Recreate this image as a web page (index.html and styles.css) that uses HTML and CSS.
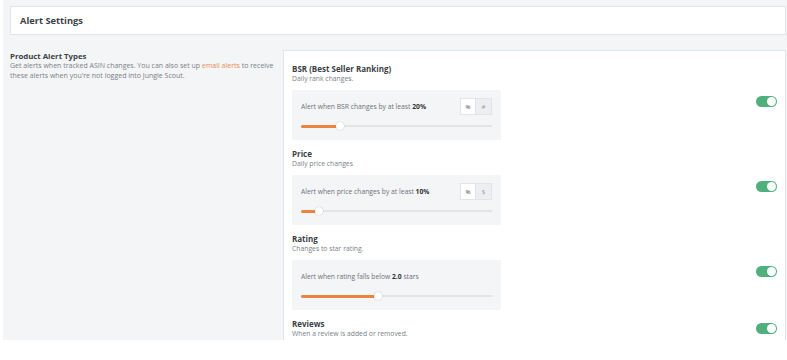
FILE: index.html
```html
<!DOCTYPE html>
<html lang="en">
<head>
    <meta charset="UTF-8">
    <title>Alert Settings</title>
    <link rel="stylesheet" href="styles.css">
</head>
<body>
<div class="page">
    <!-- Page header -->
    <div class="header-card">
        <h1>Alert Settings</h1>
    </div>

    <div class="content">
        <!-- Left description -->
        <div class="intro">
            <h2>Product Alert Types</h2>
            <p>Get alerts when tracked ASIN changes. You can also set up <a href="#">email alerts</a> to receive these alerts when you're not logged into Jungle Scout.</p>
        </div>

        <!-- Alert types -->
        <div class="alerts-card">
            <div class="alert-row">
                <div class="alert-body">
                    <h3>BSR (Best Seller Ranking)</h3>
                    <p class="sub">Daily rank changes.</p>
                    <div class="alert-box">
                        <div class="box-top">
                            <span>Alert when BSR changes by at least <b>20%</b></span>
                            <div class="units">
                                <span class="unit active">%</span>
                                <span class="unit">#</span>
                            </div>
                        </div>
                        <div class="slider">
                            <div class="fill" style="width: 20%"></div>
                            <div class="thumb" style="left: 20%"></div>
                        </div>
                    </div>
                </div>
                <div class="switch"><span class="knob"></span></div>
            </div>

            <div class="alert-row">
                <div class="alert-body">
                    <h3>Price</h3>
                    <p class="sub">Daily price changes</p>
                    <div class="alert-box">
                        <div class="box-top">
                            <span>Alert when price changes by at least <b>10%</b></span>
                            <div class="units">
                                <span class="unit active">%</span>
                                <span class="unit">$</span>
                            </div>
                        </div>
                        <div class="slider">
                            <div class="fill" style="width: 9%"></div>
                            <div class="thumb" style="left: 9%"></div>
                        </div>
                    </div>
                </div>
                <div class="switch"><span class="knob"></span></div>
            </div>

            <div class="alert-row">
                <div class="alert-body">
                    <h3>Rating</h3>
                    <p class="sub">Changes to star rating.</p>
                    <div class="alert-box">
                        <div class="box-top">
                            <span>Alert when rating falls below <b>2.0</b> stars</span>
                        </div>
                        <div class="slider">
                            <div class="fill" style="width: 40%"></div>
                            <div class="thumb" style="left: 40%"></div>
                        </div>
                    </div>
                </div>
                <div class="switch"><span class="knob"></span></div>
            </div>

            <div class="alert-row">
                <div class="alert-body">
                    <h3>Reviews</h3>
                    <p class="sub">When a review is added or removed.</p>
                </div>
                <div class="switch"><span class="knob"></span></div>
            </div>
        </div>
    </div>
</div>
</body>
</html>
```

FILE: styles.css
```css
* {
    padding: 0;
    margin: 0;
    box-sizing: border-box;
    font-family: "Open Sans", sans-serif;
}

body {
    background: #ffffff;
    color: #3b3f45;
}

.page {
    height: 340px;
    margin-left: 3px;
    padding: 6px 1px 0 7px;
    background: #f4f5f7;
    overflow: hidden;
}

.header-card {
    height: 29px;
    padding: 0 9px;
    display: flex;
    align-items: center;
    background: #ffffff;
    border: 1px solid #e1e4e8;
}

.header-card h1 {
    font-size: 9.3px;
    font-weight: 700;
    color: #3b3f45;
}

.content {
    display: flex;
    gap: 8px;
    margin-top: 15px;
}

.intro {
    width: 265px;
    flex-shrink: 0;
    padding-top: 1px;
}

.intro h2 {
    font-size: 7.8px;
    font-weight: 700;
    line-height: 10px;
}

.intro p {
    font-size: 7px;
    line-height: 10px;
    color: #7a7f87;
}

.intro a {
    color: #ea8a4f;
    text-decoration: none;
}

.alerts-card {
    flex: 1;
    min-height: 320px;
    padding: 12px 8px 0 8px;
    background: #ffffff;
    border: 1px solid #e1e4e8;
}

.alert-row {
    display: flex;
    align-items: center;
    justify-content: space-between;
    margin-bottom: 8px;
}

.alert-body {
    width: 209px;
}

.alert-body h3 {
    font-size: 8px;
    font-weight: 700;
    line-height: 11px;
}

.alert-body .sub {
    font-size: 6.8px;
    line-height: 10px;
    color: #7a7f87;
}

.alert-box {
    height: 50px;
    margin-top: 6px;
    padding: 8px 9px 0 9px;
    background: #f4f5f7;
}

.box-top {
    height: 17px;
    display: flex;
    align-items: center;
    justify-content: space-between;
    font-size: 6.75px;
    color: #6d7177;
}

.box-top b {
    color: #2f3338;
}

.units {
    display: flex;
    height: 17px;
    border: 1px solid #e1e4e8;
}

.unit {
    width: 15px;
    display: flex;
    align-items: center;
    justify-content: center;
    font-size: 6px;
    color: #9aa0a6;
    background: #eceef1;
}

.unit.active {
    background: #ffffff;
    color: #3b3f45;
    border-right: 1px solid #e1e4e8;
}

.slider {
    position: relative;
    height: 2px;
    margin-top: 10px;
    background: #e3e4e6;
}

.fill {
    height: 3px;
    margin-top: -0.5px;
    background: #ec8441;
    border-radius: 2px;
}

.thumb {
    position: absolute;
    top: -3px;
    width: 8px;
    height: 8px;
    margin-left: -3px;
    border-radius: 50%;
    background: #ffffff;
    box-shadow: 0 0 1px rgba(0, 0, 0, 0.35);
}

.switch {
    width: 21px;
    height: 11px;
    padding: 1px;
    display: flex;
    justify-content: flex-end;
    border-radius: 6px;
    background: #4fb07d;
}

.knob {
    width: 9px;
    height: 9px;
    border-radius: 50%;
    background: #ffffff;
}
```
